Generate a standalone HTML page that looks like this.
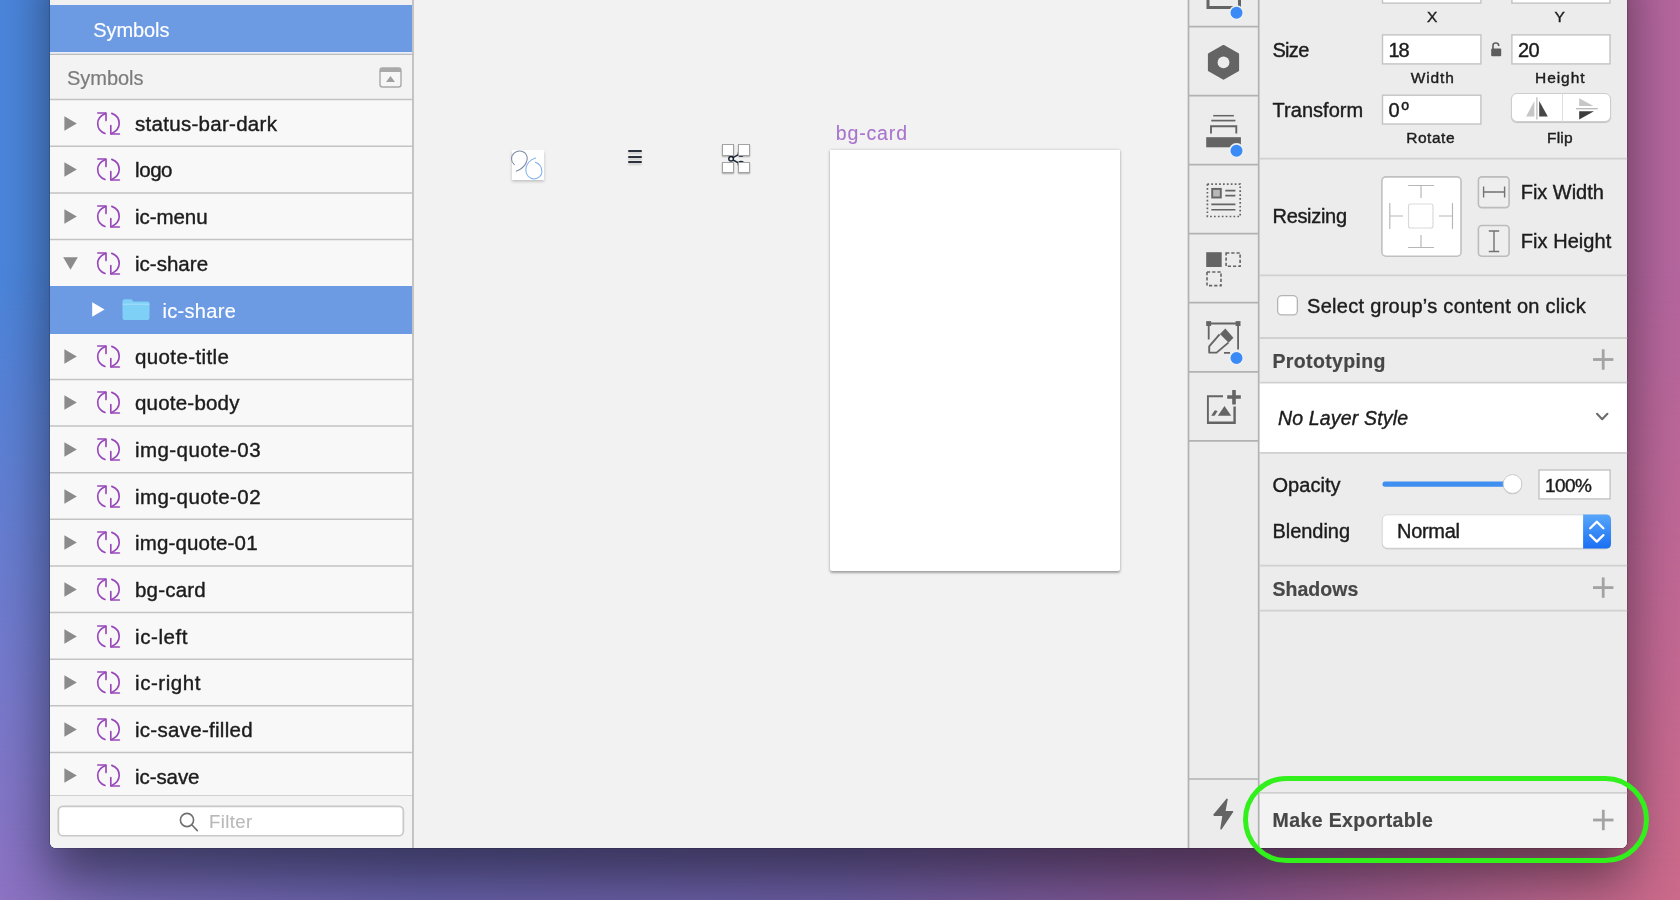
<!DOCTYPE html>
<html><head><meta charset="utf-8"><title>Sketch</title><style>
html,body{margin:0;padding:0}
body{width:1680px;height:900px;overflow:hidden;position:relative;font-family:"Liberation Sans",sans-serif;
background:linear-gradient(90deg,#4a86dc 0%,#5c7ad0 25%,#7a6cbc 50%,#a465a8 80%,#b5669e 100%);}
#bgb{position:absolute;left:0;top:0;width:1680px;height:900px;background:linear-gradient(90deg,#8e72c2 0%,#7468b2 8%,#6660a8 25%,#6a5ca0 50%,#83548f 72%,#b8648c 92%,#cc6a8a 100%);-webkit-mask-image:linear-gradient(to bottom,rgba(0,0,0,0) 30%,rgba(0,0,0,1) 100%);mask-image:linear-gradient(to bottom,rgba(0,0,0,0) 30%,rgba(0,0,0,1) 100%)}
.a{position:absolute;display:block}
.t{position:absolute;white-space:nowrap;display:block}
#win{border-radius:6px;box-shadow:0 28px 50px 2px rgba(0,0,0,.46),0 0 0 .6px rgba(0,0,0,.25);background:#ececec}
</style></head><body>
<div id="bgb"></div>
<div class="a" id="win" style="left:50px;top:-60px;width:1577.2px;height:908px;"></div>
<div class="a" style="left:50.00px;top:-10.00px;width:362.40px;height:858.00px;background:#f8f8f8;border-bottom-left-radius:6px;"></div>
<div class="a" style="left:50.00px;top:-10.00px;width:362.40px;height:15.00px;background:#f0f0f0;"></div>
<div class="a" style="left:50.00px;top:5.00px;width:362.40px;height:46.80px;background:#6c9be3;"></div>
<div class="a" style="left:50.00px;top:51.80px;width:362.40px;height:2.20px;background:#e9eef8;"></div>
<div class="a" style="left:50.00px;top:54.00px;width:362.40px;height:45.00px;background:#f3f3f3;"></div>
<svg class="a" style="left:378px;top:66px" width="25" height="23" viewBox="0 0 25 23"><rect x="2" y="2" width="21" height="19" rx="2.5" fill="#f6f6f6" stroke="#a9a9a9" stroke-width="1.4"/><rect x="2" y="2" width="21" height="4" fill="#a9a9a9"/><path d="M8 16 L12.5 10 L17 16 Z" fill="#a0a0a0"/></svg>
<svg class="a" style="left:63px;top:114.61px" width="15" height="17" viewBox="0 0 15 17"><path d="M1.4 1.2 L13.8 8.5 L1.4 15.8 Z" fill="#8b8b8b"/></svg>
<svg class="a" style="left:96px;top:110.61px" width="26" height="26" viewBox="0 0 26 26" fill="none" stroke="#9847bb" stroke-width="1.65" stroke-linecap="round" stroke-linejoin="round"><path d="M9 22.5 C4.6 21 1.7 17 1.7 12.3 C1.7 8.2 4.4 4.6 9.4 2.4"/><path d="M1.8 2 H10 V9.6"/><path d="M15.8 2.4 C20.3 4 23.2 8 23.2 12.6 C23.2 16.8 20.4 20.4 15.4 22.7"/><path d="M14.8 14.6 V23 H23.4"/></svg>
<svg class="a" style="left:63px;top:161.25px" width="15" height="17" viewBox="0 0 15 17"><path d="M1.4 1.2 L13.8 8.5 L1.4 15.8 Z" fill="#8b8b8b"/></svg>
<svg class="a" style="left:96px;top:157.25px" width="26" height="26" viewBox="0 0 26 26" fill="none" stroke="#9847bb" stroke-width="1.65" stroke-linecap="round" stroke-linejoin="round"><path d="M9 22.5 C4.6 21 1.7 17 1.7 12.3 C1.7 8.2 4.4 4.6 9.4 2.4"/><path d="M1.8 2 H10 V9.6"/><path d="M15.8 2.4 C20.3 4 23.2 8 23.2 12.6 C23.2 16.8 20.4 20.4 15.4 22.7"/><path d="M14.8 14.6 V23 H23.4"/></svg>
<svg class="a" style="left:63px;top:207.88px" width="15" height="17" viewBox="0 0 15 17"><path d="M1.4 1.2 L13.8 8.5 L1.4 15.8 Z" fill="#8b8b8b"/></svg>
<svg class="a" style="left:96px;top:203.88px" width="26" height="26" viewBox="0 0 26 26" fill="none" stroke="#9847bb" stroke-width="1.65" stroke-linecap="round" stroke-linejoin="round"><path d="M9 22.5 C4.6 21 1.7 17 1.7 12.3 C1.7 8.2 4.4 4.6 9.4 2.4"/><path d="M1.8 2 H10 V9.6"/><path d="M15.8 2.4 C20.3 4 23.2 8 23.2 12.6 C23.2 16.8 20.4 20.4 15.4 22.7"/><path d="M14.8 14.6 V23 H23.4"/></svg>
<svg class="a" style="left:62px;top:255.51px" width="17" height="15" viewBox="0 0 17 15"><path d="M1.2 1.2 H15.8 L8.5 13.8 Z" fill="#8b8b8b"/></svg>
<svg class="a" style="left:96px;top:250.51px" width="26" height="26" viewBox="0 0 26 26" fill="none" stroke="#9847bb" stroke-width="1.65" stroke-linecap="round" stroke-linejoin="round"><path d="M9 22.5 C4.6 21 1.7 17 1.7 12.3 C1.7 8.2 4.4 4.6 9.4 2.4"/><path d="M1.8 2 H10 V9.6"/><path d="M15.8 2.4 C20.3 4 23.2 8 23.2 12.6 C23.2 16.8 20.4 20.4 15.4 22.7"/><path d="M14.8 14.6 V23 H23.4"/></svg>
<div class="a" style="left:50.00px;top:285.82px;width:362.40px;height:47.73px;background:#6c9be3;"></div>
<svg class="a" style="left:91px;top:301.13px" width="15" height="17" viewBox="0 0 15 17"><path d="M1.2 1.2 L13.6 8.5 L1.2 15.8 Z" fill="#fff"/></svg>
<svg class="a" style="left:122px;top:297.63px" width="28" height="24" viewBox="0 0 28 24"><path d="M0.5 3.2 Q0.5 1.2 2.5 1.2 H8.5 Q9.8 1.2 10.4 2.2 L11.2 3.6 H25.5 Q27.5 3.6 27.5 5.6 V20 Q27.5 22 25.5 22 H2.5 Q0.5 22 0.5 20 Z" fill="#7fd0f6"/><path d="M0.5 6.2 H27.5" stroke="#a5e0fa" stroke-width="1"/></svg>
<svg class="a" style="left:63px;top:347.76px" width="15" height="17" viewBox="0 0 15 17"><path d="M1.4 1.2 L13.8 8.5 L1.4 15.8 Z" fill="#8b8b8b"/></svg>
<svg class="a" style="left:96px;top:343.76px" width="26" height="26" viewBox="0 0 26 26" fill="none" stroke="#9847bb" stroke-width="1.65" stroke-linecap="round" stroke-linejoin="round"><path d="M9 22.5 C4.6 21 1.7 17 1.7 12.3 C1.7 8.2 4.4 4.6 9.4 2.4"/><path d="M1.8 2 H10 V9.6"/><path d="M15.8 2.4 C20.3 4 23.2 8 23.2 12.6 C23.2 16.8 20.4 20.4 15.4 22.7"/><path d="M14.8 14.6 V23 H23.4"/></svg>
<svg class="a" style="left:63px;top:394.40px" width="15" height="17" viewBox="0 0 15 17"><path d="M1.4 1.2 L13.8 8.5 L1.4 15.8 Z" fill="#8b8b8b"/></svg>
<svg class="a" style="left:96px;top:390.40px" width="26" height="26" viewBox="0 0 26 26" fill="none" stroke="#9847bb" stroke-width="1.65" stroke-linecap="round" stroke-linejoin="round"><path d="M9 22.5 C4.6 21 1.7 17 1.7 12.3 C1.7 8.2 4.4 4.6 9.4 2.4"/><path d="M1.8 2 H10 V9.6"/><path d="M15.8 2.4 C20.3 4 23.2 8 23.2 12.6 C23.2 16.8 20.4 20.4 15.4 22.7"/><path d="M14.8 14.6 V23 H23.4"/></svg>
<svg class="a" style="left:63px;top:441.03px" width="15" height="17" viewBox="0 0 15 17"><path d="M1.4 1.2 L13.8 8.5 L1.4 15.8 Z" fill="#8b8b8b"/></svg>
<svg class="a" style="left:96px;top:437.03px" width="26" height="26" viewBox="0 0 26 26" fill="none" stroke="#9847bb" stroke-width="1.65" stroke-linecap="round" stroke-linejoin="round"><path d="M9 22.5 C4.6 21 1.7 17 1.7 12.3 C1.7 8.2 4.4 4.6 9.4 2.4"/><path d="M1.8 2 H10 V9.6"/><path d="M15.8 2.4 C20.3 4 23.2 8 23.2 12.6 C23.2 16.8 20.4 20.4 15.4 22.7"/><path d="M14.8 14.6 V23 H23.4"/></svg>
<svg class="a" style="left:63px;top:487.66px" width="15" height="17" viewBox="0 0 15 17"><path d="M1.4 1.2 L13.8 8.5 L1.4 15.8 Z" fill="#8b8b8b"/></svg>
<svg class="a" style="left:96px;top:483.66px" width="26" height="26" viewBox="0 0 26 26" fill="none" stroke="#9847bb" stroke-width="1.65" stroke-linecap="round" stroke-linejoin="round"><path d="M9 22.5 C4.6 21 1.7 17 1.7 12.3 C1.7 8.2 4.4 4.6 9.4 2.4"/><path d="M1.8 2 H10 V9.6"/><path d="M15.8 2.4 C20.3 4 23.2 8 23.2 12.6 C23.2 16.8 20.4 20.4 15.4 22.7"/><path d="M14.8 14.6 V23 H23.4"/></svg>
<svg class="a" style="left:63px;top:534.29px" width="15" height="17" viewBox="0 0 15 17"><path d="M1.4 1.2 L13.8 8.5 L1.4 15.8 Z" fill="#8b8b8b"/></svg>
<svg class="a" style="left:96px;top:530.29px" width="26" height="26" viewBox="0 0 26 26" fill="none" stroke="#9847bb" stroke-width="1.65" stroke-linecap="round" stroke-linejoin="round"><path d="M9 22.5 C4.6 21 1.7 17 1.7 12.3 C1.7 8.2 4.4 4.6 9.4 2.4"/><path d="M1.8 2 H10 V9.6"/><path d="M15.8 2.4 C20.3 4 23.2 8 23.2 12.6 C23.2 16.8 20.4 20.4 15.4 22.7"/><path d="M14.8 14.6 V23 H23.4"/></svg>
<svg class="a" style="left:63px;top:580.91px" width="15" height="17" viewBox="0 0 15 17"><path d="M1.4 1.2 L13.8 8.5 L1.4 15.8 Z" fill="#8b8b8b"/></svg>
<svg class="a" style="left:96px;top:576.91px" width="26" height="26" viewBox="0 0 26 26" fill="none" stroke="#9847bb" stroke-width="1.65" stroke-linecap="round" stroke-linejoin="round"><path d="M9 22.5 C4.6 21 1.7 17 1.7 12.3 C1.7 8.2 4.4 4.6 9.4 2.4"/><path d="M1.8 2 H10 V9.6"/><path d="M15.8 2.4 C20.3 4 23.2 8 23.2 12.6 C23.2 16.8 20.4 20.4 15.4 22.7"/><path d="M14.8 14.6 V23 H23.4"/></svg>
<svg class="a" style="left:63px;top:627.55px" width="15" height="17" viewBox="0 0 15 17"><path d="M1.4 1.2 L13.8 8.5 L1.4 15.8 Z" fill="#8b8b8b"/></svg>
<svg class="a" style="left:96px;top:623.55px" width="26" height="26" viewBox="0 0 26 26" fill="none" stroke="#9847bb" stroke-width="1.65" stroke-linecap="round" stroke-linejoin="round"><path d="M9 22.5 C4.6 21 1.7 17 1.7 12.3 C1.7 8.2 4.4 4.6 9.4 2.4"/><path d="M1.8 2 H10 V9.6"/><path d="M15.8 2.4 C20.3 4 23.2 8 23.2 12.6 C23.2 16.8 20.4 20.4 15.4 22.7"/><path d="M14.8 14.6 V23 H23.4"/></svg>
<svg class="a" style="left:63px;top:674.18px" width="15" height="17" viewBox="0 0 15 17"><path d="M1.4 1.2 L13.8 8.5 L1.4 15.8 Z" fill="#8b8b8b"/></svg>
<svg class="a" style="left:96px;top:670.18px" width="26" height="26" viewBox="0 0 26 26" fill="none" stroke="#9847bb" stroke-width="1.65" stroke-linecap="round" stroke-linejoin="round"><path d="M9 22.5 C4.6 21 1.7 17 1.7 12.3 C1.7 8.2 4.4 4.6 9.4 2.4"/><path d="M1.8 2 H10 V9.6"/><path d="M15.8 2.4 C20.3 4 23.2 8 23.2 12.6 C23.2 16.8 20.4 20.4 15.4 22.7"/><path d="M14.8 14.6 V23 H23.4"/></svg>
<svg class="a" style="left:63px;top:720.81px" width="15" height="17" viewBox="0 0 15 17"><path d="M1.4 1.2 L13.8 8.5 L1.4 15.8 Z" fill="#8b8b8b"/></svg>
<svg class="a" style="left:96px;top:716.81px" width="26" height="26" viewBox="0 0 26 26" fill="none" stroke="#9847bb" stroke-width="1.65" stroke-linecap="round" stroke-linejoin="round"><path d="M9 22.5 C4.6 21 1.7 17 1.7 12.3 C1.7 8.2 4.4 4.6 9.4 2.4"/><path d="M1.8 2 H10 V9.6"/><path d="M15.8 2.4 C20.3 4 23.2 8 23.2 12.6 C23.2 16.8 20.4 20.4 15.4 22.7"/><path d="M14.8 14.6 V23 H23.4"/></svg>
<svg class="a" style="left:63px;top:767.44px" width="15" height="17" viewBox="0 0 15 17"><path d="M1.4 1.2 L13.8 8.5 L1.4 15.8 Z" fill="#8b8b8b"/></svg>
<svg class="a" style="left:96px;top:763.44px" width="26" height="26" viewBox="0 0 26 26" fill="none" stroke="#9847bb" stroke-width="1.65" stroke-linecap="round" stroke-linejoin="round"><path d="M9 22.5 C4.6 21 1.7 17 1.7 12.3 C1.7 8.2 4.4 4.6 9.4 2.4"/><path d="M1.8 2 H10 V9.6"/><path d="M15.8 2.4 C20.3 4 23.2 8 23.2 12.6 C23.2 16.8 20.4 20.4 15.4 22.7"/><path d="M14.8 14.6 V23 H23.4"/></svg>
<div class="a" style="left:50.00px;top:795.00px;width:362.40px;height:53.00px;background:#f3f3f3;border-top:1.5px solid #cfcfcf;border-bottom-left-radius:6px;box-sizing:border-box;"></div>
<svg class="a" style="left:55px;top:803px;" width="352" height="37" viewBox="55 803 352 37"><rect x="58.35" y="806.35" width="345.00" height="29.40" rx="4.5" fill="#fff" stroke="#c8c8c8" stroke-width="1.7"/></svg>
<svg class="a" style="left:177.3px;top:810.4px" width="24" height="24" viewBox="0 0 24 24" fill="none" stroke="#6f6f6f" stroke-width="1.6" stroke-linecap="round"><circle cx="10" cy="10" r="6.6"/><path d="M15 15 L20.3 20.6"/></svg>
<div class="a" style="left:413.20px;top:-10.00px;width:774.80px;height:858.00px;background:#f2f2f2;"></div>
<div class="a" style="left:512.00px;top:150.00px;width:31.60px;height:30.20px;background:#fff;box-shadow:0 1.5px 3px rgba(0,0,0,.22);"></div>
<svg class="a" style="left:505px;top:142px" width="48" height="48" viewBox="505 142 48 48" fill="none" stroke-width="1.05" stroke-linecap="round"><path d="M514.3 164.6 C510.8 162 510.4 156 514.4 152.8 C518.5 149.5 525.2 150.8 526.9 156.2 C528.4 161.2 524 168.6 516.3 171.1" stroke="#7f8aa3"/><path d="M535.7 158 C530 159.5 526 164 525.8 169.5 C525.6 175 529.5 178.9 534 178.9 C538.5 178.9 541.9 175.5 541.9 171.5 C541.9 167 539 163.6 535.4 162.3" stroke="#7fb0ee"/></svg>
<div class="a" style="left:627.60px;top:150.20px;width:14.40px;height:2.10px;background:#2a303c;border-radius:1px;box-shadow:0 2px 2px rgba(0,0,0,.16);"></div>
<div class="a" style="left:627.60px;top:155.55px;width:14.40px;height:2.10px;background:#2a303c;border-radius:1px;box-shadow:0 2px 2px rgba(0,0,0,.16);"></div>
<div class="a" style="left:627.60px;top:160.90px;width:14.40px;height:2.10px;background:#2a303c;border-radius:1px;box-shadow:0 2px 2px rgba(0,0,0,.16);"></div>
<svg class="a" style="left:716px;top:138px" width="40" height="40" viewBox="716 138 40 40" fill="none" stroke="#1c2738" stroke-width="1.5"><circle cx="731.1" cy="158.8" r="2.3"/><path d="M733 157.6 L738.8 154.4 M733 160 L738.8 163.2"/><circle cx="741" cy="153.4" r="2.6"/><circle cx="741" cy="164.2" r="2.6"/></svg>
<div class="a" style="left:722.00px;top:144.20px;width:11.90px;height:11.70px;background:#fff;border:1px solid #a2a2a2;box-sizing:border-box;box-shadow:0 1px 1.5px rgba(0,0,0,.3);"></div>
<div class="a" style="left:737.80px;top:144.20px;width:11.90px;height:11.70px;background:#fff;border:1px solid #a2a2a2;box-sizing:border-box;box-shadow:0 1px 1.5px rgba(0,0,0,.3);"></div>
<div class="a" style="left:722.00px;top:161.70px;width:11.90px;height:11.70px;background:#fff;border:1px solid #a2a2a2;box-sizing:border-box;box-shadow:0 1px 1.5px rgba(0,0,0,.3);"></div>
<div class="a" style="left:737.80px;top:161.70px;width:11.90px;height:11.70px;background:#fff;border:1px solid #a2a2a2;box-sizing:border-box;box-shadow:0 1px 1.5px rgba(0,0,0,.3);"></div>
<div class="a" style="left:830.00px;top:150.00px;width:290.00px;height:421.20px;background:#fff;border-radius:0 0 2px 2px;box-shadow:0 1.5px 2.5px rgba(0,0,0,.30),0 0 3.5px rgba(0,0,0,.13);"></div>
<div class="a" style="left:1188.00px;top:-10.00px;width:71.00px;height:858.00px;background:#ececec;"></div>
<svg class="a" style="left:1188px;top:0px" width="72" height="850" viewBox="1188 0 72 850">
<g fill="none" stroke="#646464">
<!-- icon1 partial rect -->
<path d="M1208 -5 V7.6 H1239.5 V-5" stroke-width="3"/>
<!-- icon3 -->
<path d="M1213.2 115.7 H1233.9" stroke-width="1.5"/>
<path d="M1211.3 120.6 H1235.4" stroke-width="1.7"/>
<path d="M1211 133.6 V126.2 H1236.3 V133.6" stroke-width="1.9"/>
<!-- icon4 -->
<rect x="1207.4" y="184.1" width="32.8" height="32.4" stroke-width="1.7" stroke-dasharray="1.7 2.2"/>
<rect x="1212.2" y="188.9" width="8.6" height="8.6" stroke-width="1.9" fill="#b7b7b7"/>
<path d="M1225.3 190.6 H1235.4 M1225.3 195.6 H1235.4 M1211.3 204.4 H1235.4 M1211.3 209.8 H1235.4" stroke-width="1.6"/>
<!-- icon5 -->
<rect x="1226.1" y="253" width="14" height="13.3" stroke-width="1.6" stroke-dasharray="3.2 2"/>
<rect x="1207" y="272" width="14" height="13.6" stroke-width="1.6" stroke-dasharray="3.2 2"/>
<!-- icon6 -->
<path d="M1208.7 323.5 H1238.1 M1208.7 323.5 V339.5 M1238.1 323.5 V349.4 M1224 352.8 H1230" stroke-width="1.8"/>
<path d="M1219.6 334.4 L1209.2 346.3 V352.6 H1216.6 L1228.4 342.6" stroke-width="1.9" stroke-linejoin="round"/>
<!-- icon7 -->
<path d="M1223 396.3 H1207.9 V422.6" stroke-width="1.9"/>
<path d="M1207 422.8 H1234.6 V406.5" stroke-width="2.4"/>
</g>
<g fill="#646464">
<path d="M1223.5 46 L1238 54.2 V70.4 L1223.5 78.6 L1209 70.4 V54.2 Z" stroke="#646464" stroke-width="2.2" stroke-linejoin="round"/><circle cx="1223.5" cy="62.4" r="5.9" fill="#ececec"/>
<rect x="1206.2" y="137.2" width="34.7" height="10.1"/>
<rect x="1206.2" y="252.2" width="15.5" height="14.8"/>
<rect x="1206.2" y="321.1" width="4.9" height="4.9"/><rect x="1235.6" y="321.1" width="4.9" height="4.9"/>
<path d="M1219.9 333.9 L1225.3 328.4 L1233.4 337.8 L1228.7 342.7 Z"/>
<path d="M1227.2 395.3 H1240.8 V398.8 H1227.2 Z M1232.2 390 H1235.8 V404.5 H1232.2 Z"/>
<path d="M1224.5 406 L1231.2 415.8 H1217.8 Z M1211.2 415.8 L1214.8 410.2 L1217.6 410.9 L1214.6 415.8 Z"/>
<path d="M1226.7 798.5 L1213.2 814.8 L1214 815.9 H1222.3 L1220.2 829.2 L1221.5 829.5 L1233.4 811.8 L1232.8 810.9 H1225.6 L1227.8 799 Z"/>
</g>
<g fill="#3b8bf6" stroke="#eef0f3" stroke-width="1.6">
<circle cx="1236.5" cy="12.8" r="6.8"/><circle cx="1236.5" cy="150.7" r="6.8"/><circle cx="1236.5" cy="358" r="6.8"/>
</g>
</svg>

<div class="a" style="left:1259.00px;top:-10.00px;width:368.20px;height:858.00px;background:#ececec;border-bottom-right-radius:6px;"></div>
<svg class="a" style="left:1379px;top:-22px;" width="105" height="29" viewBox="1379 -22 105 29"><rect x="1382.50" y="-19.30" width="98.40" height="22.40" rx="0" fill="#fff" stroke="#c3c3c3" stroke-width="1.4"/></svg>
<svg class="a" style="left:1509px;top:-22px;" width="105" height="29" viewBox="1509 -22 105 29"><rect x="1511.90" y="-19.30" width="98.10" height="22.40" rx="0" fill="#fff" stroke="#c3c3c3" stroke-width="1.4"/></svg>
<svg class="a" style="left:1379px;top:32px;" width="105" height="36" viewBox="1379 32 105 36"><rect x="1382.50" y="34.90" width="98.40" height="29.00" rx="0" fill="#fff" stroke="#c3c3c3" stroke-width="1.4"/></svg>
<svg class="a" style="left:1509px;top:32px;" width="105" height="36" viewBox="1509 32 105 36"><rect x="1511.90" y="34.90" width="98.10" height="29.00" rx="0" fill="#fff" stroke="#c3c3c3" stroke-width="1.4"/></svg>
<svg class="a" style="left:1488px;top:38.7px" width="16" height="20" viewBox="0 0 16 20"><path d="M5 10 V6.2 C5 3.2 10.6 3.2 10.6 6.2 V7" fill="none" stroke="#5d5d5d" stroke-width="1.6"/><rect x="3.2" y="9.6" width="10" height="7.6" rx="1" fill="#5d5d5d"/></svg>
<svg class="a" style="left:1379px;top:92px;" width="105" height="36" viewBox="1379 92 105 36"><rect x="1382.50" y="95.20" width="98.40" height="28.80" rx="0" fill="#fff" stroke="#c3c3c3" stroke-width="1.4"/></svg>
<div class="a" style="left:1511.20px;top:93.40px;width:99.50px;height:29.00px;background:#fff;border:1px solid #cdcdcd;border-radius:6px;box-sizing:border-box;box-shadow:0 1px 1px rgba(0,0,0,.18);"></div>
<div class="a" style="left:1561.60px;top:94.00px;width:1.10px;height:27.60px;background:#dedede;"></div>
<svg class="a" style="left:1520px;top:92px" width="86" height="32" viewBox="1520 92 86 32"><path d="M1534.4 101.1 V116.4 H1526.1 Z" fill="#c6c6c6"/><path d="M1539.2 101.1 V116.4 H1547.8 Z" fill="#474747"/><path d="M1536.9 97.2 V119.4" stroke="#c2c2c2" stroke-width="1.4"/><path d="M1579.2 98.3 V106.1 H1593.4 Z" fill="#c6c6c6"/><path d="M1579.2 111.3 H1594 L1579.2 119.4 Z" fill="#3c3c3c"/><path d="M1576.1 108.7 H1597.8" stroke="#bcbcbc" stroke-width="1.4"/></svg>
<svg class="a" style="left:1379px;top:174px;" width="86" height="86" viewBox="1379 174 86 86"><rect x="1381.90" y="176.90" width="79.10" height="79.30" rx="4" fill="#fff" stroke="#c0c0c0" stroke-width="1.6"/></svg>
<svg class="a" style="left:1381px;top:176px" width="81" height="81" viewBox="0 0 81 81" fill="none" stroke="#b6b6b6" stroke-width="1.15"><path d="M27 9.5 H53 M40 9.5 V22"/><path d="M27 71.5 H53 M40 71.5 V59"/><path d="M8.8 27 V53 M8.8 40 H22"/><path d="M71.5 27 V53 M71.5 40 H58"/><rect x="27.5" y="28" width="24.5" height="24" rx="2" stroke="#d9d9d9"/></svg>
<svg class="a" style="left:1475px;top:174px;" width="38" height="38" viewBox="1475 174 38 38"><rect x="1478.40" y="176.90" width="30.70" height="30.70" rx="3.5" fill="#eeeeee" stroke="#bcbcbc" stroke-width="1.6"/></svg>
<svg class="a" style="left:1475px;top:222px;" width="38" height="38" viewBox="1475 222 38 38"><rect x="1478.40" y="225.50" width="30.70" height="30.70" rx="3.5" fill="#eeeeee" stroke="#bcbcbc" stroke-width="1.6"/></svg>
<svg class="a" style="left:1477.6px;top:176.3px" width="32" height="32" viewBox="0 0 32 32" fill="none" stroke="#727272" stroke-width="1.4"><path d="M5.6 10.5 V21.5 M26.6 10.5 V21.5 M5.6 16 H26.6"/></svg>
<svg class="a" style="left:1477.6px;top:224.6px" width="32" height="32" viewBox="0 0 32 32" fill="none" stroke="#727272" stroke-width="1.4"><path d="M10.8 6 H21.2 M10.8 26.5 H21.2 M16 6 V26.5"/></svg>
<svg class="a" style="left:1275px;top:293px;" width="27" height="26" viewBox="1275 293 27 26"><rect x="1277.65" y="295.65" width="19.70" height="19.30" rx="4.2" fill="#fff" stroke="#b4b4b4" stroke-width="1.3"/></svg>
<div class="a" style="left:1259.00px;top:383.30px;width:368.20px;height:68.90px;background:#fff;"></div>
<svg class="a" style="left:1594px;top:410px" width="16" height="13" viewBox="0 0 16 13" fill="none" stroke="#6c6c6c" stroke-width="2.1" stroke-linecap="round" stroke-linejoin="round"><path d="M3 3.8 L8.2 9.2 L13.4 3.8"/></svg>
<svg class="a" style="left:1380px;top:478px" width="130" height="12" viewBox="1380 478 130 12"><rect x="1382.5" y="481.6" width="125" height="5.1" rx="2.5" fill="#3f8ff0"/></svg>
<svg class="a" style="left:1498px;top:470px" width="30" height="30" viewBox="1498 470 30 30"><circle cx="1512.5" cy="484.7" r="9.6" fill="rgba(0,0,0,.18)"/><circle cx="1512.5" cy="484" r="9.4" fill="#fff" stroke="#c6c6c6" stroke-width="0.9"/></svg>
<svg class="a" style="left:1536px;top:467px;" width="78" height="36" viewBox="1536 467 78 36"><rect x="1539.00" y="470.00" width="71.10" height="28.90" rx="0" fill="#fff" stroke="#c3c3c3" stroke-width="1.4"/></svg>
<svg class="a" style="left:1378px;top:510px" width="238" height="44" viewBox="1378 510 238 44"><defs><linearGradient id="bg1" x1="0" y1="0" x2="0" y2="1"><stop offset="0" stop-color="#58a6fa"/><stop offset="1" stop-color="#1a6ff3"/></linearGradient></defs><rect x="1382" y="515.4" width="228.8" height="33.8" rx="5.5" fill="rgba(0,0,0,.22)"/><rect x="1382.2" y="514.8" width="228.4" height="33.4" rx="5.2" fill="#fff" stroke="#d2d2d2" stroke-width="0.8"/><path d="M1583.1 514.4 H1605.8 Q1611 514.4 1611 519.6 V543.4 Q1611 548.6 1605.8 548.6 H1583.1 Z" fill="url(#bg1)"/><path d="M1590.2 528.3 L1596.8 521.8 L1603.4 528.3 M1590.2 535.1 L1596.8 541.6 L1603.4 535.1" fill="none" stroke="#fff" stroke-width="2.3" stroke-linecap="round" stroke-linejoin="round"/></svg>
<div class="a" style="left:1259.00px;top:793.40px;width:368.20px;height:54.60px;background:#f3f3f3;border-bottom-right-radius:6px;"></div>
<svg class="a" style="left:0;top:0" width="1680" height="900" fill="none"><path d="M50.00 54.30 H412.40" stroke="#bcbcbc" stroke-width="1.3"/><path d="M50.00 146.28 H412.40" stroke="#c3c3c3" stroke-width="1.5"/><path d="M50.00 192.91 H412.40" stroke="#c3c3c3" stroke-width="1.5"/><path d="M50.00 239.54 H412.40" stroke="#c3c3c3" stroke-width="1.5"/><path d="M50.00 379.43 H412.40" stroke="#c3c3c3" stroke-width="1.5"/><path d="M50.00 426.06 H412.40" stroke="#c3c3c3" stroke-width="1.5"/><path d="M50.00 472.69 H412.40" stroke="#c3c3c3" stroke-width="1.5"/><path d="M50.00 519.32 H412.40" stroke="#c3c3c3" stroke-width="1.5"/><path d="M50.00 565.95 H412.40" stroke="#c3c3c3" stroke-width="1.5"/><path d="M50.00 612.58 H412.40" stroke="#c3c3c3" stroke-width="1.5"/><path d="M50.00 659.21 H412.40" stroke="#c3c3c3" stroke-width="1.5"/><path d="M50.00 705.84 H412.40" stroke="#c3c3c3" stroke-width="1.5"/><path d="M50.00 752.47 H412.40" stroke="#c3c3c3" stroke-width="1.5"/><path d="M50.00 99.60 H412.40" stroke="#c3c3c3" stroke-width="1.5"/><path d="M413.00 -5.00 V848.00" stroke="#b6b6b6" stroke-width="1.5"/><path d="M1188.50 -5.00 V848.00" stroke="#b2b2b2" stroke-width="1.7"/><path d="M1258.70 -5.00 V848.00" stroke="#b2b2b2" stroke-width="1.7"/><path d="M1188.00 26.60 H1258.70" stroke="#b2b2b2" stroke-width="1.7"/><path d="M1188.00 95.65 H1258.70" stroke="#b2b2b2" stroke-width="1.7"/><path d="M1188.00 164.60 H1258.70" stroke="#b2b2b2" stroke-width="1.7"/><path d="M1188.00 233.70 H1258.70" stroke="#b2b2b2" stroke-width="1.7"/><path d="M1188.00 302.70 H1258.70" stroke="#b2b2b2" stroke-width="1.7"/><path d="M1188.00 371.80 H1258.70" stroke="#b2b2b2" stroke-width="1.7"/><path d="M1188.00 440.90 H1258.70" stroke="#b2b2b2" stroke-width="1.7"/><path d="M1188.00 779.00 H1258.70" stroke="#b2b2b2" stroke-width="1.7"/><path d="M1259.70 158.70 H1627.20" stroke="#d0d0d0" stroke-width="1.8"/><path d="M1259.70 275.30 H1627.20" stroke="#d0d0d0" stroke-width="1.8"/><path d="M1259.70 338.00 H1627.20" stroke="#d0d0d0" stroke-width="1.8"/><path d="M1593.00 359.50 H1613.40" stroke="#a3a3a3" stroke-width="2.8"/><path d="M1603.20 349.30 V369.70" stroke="#a3a3a3" stroke-width="2.8"/><path d="M1259.70 382.65 H1627.20" stroke="#d0d0d0" stroke-width="1.8"/><path d="M1259.70 452.85 H1627.20" stroke="#d0d0d0" stroke-width="1.8"/><path d="M1259.70 565.70 H1627.20" stroke="#d0d0d0" stroke-width="1.8"/><path d="M1593.00 587.60 H1613.40" stroke="#a3a3a3" stroke-width="2.8"/><path d="M1603.20 577.40 V597.80" stroke="#a3a3a3" stroke-width="2.8"/><path d="M1259.70 610.70 H1627.20" stroke="#d0d0d0" stroke-width="1.8"/><path d="M1259.70 792.85 H1627.20" stroke="#d0d0d0" stroke-width="1.8"/><path d="M1593.10 820.00 H1613.50" stroke="#a3a3a3" stroke-width="2.8"/><path d="M1603.30 809.80 V830.20" stroke="#a3a3a3" stroke-width="2.8"/></svg>
<svg class="a" style="left:0;top:0;opacity:.999" width="1680" height="900" font-family="Liberation Sans, sans-serif"><text x="93.25" y="37" font-size="20" fill="#ffffff" letter-spacing="-0.075" stroke="#ffffff" stroke-width="0.15">Symbols</text><text x="67.00" y="85" font-size="20" fill="#7b7b7b" letter-spacing="-0.033" stroke="#7b7b7b" stroke-width="0.2">Symbols</text><text x="135.00" y="131" font-size="20.5" fill="#1c1c1c" letter-spacing="0.288" stroke="#1c1c1c" stroke-width="0.4">status-bar-dark</text><text x="135.00" y="177" font-size="20.5" fill="#1c1c1c" letter-spacing="-0.415" stroke="#1c1c1c" stroke-width="0.4">logo</text><text x="135.00" y="224" font-size="20.5" fill="#1c1c1c" letter-spacing="-0.063" stroke="#1c1c1c" stroke-width="0.4">ic-menu</text><text x="135.00" y="271" font-size="20.5" fill="#1c1c1c" letter-spacing="0.018" stroke="#1c1c1c" stroke-width="0.4">ic-share</text><text x="162.50" y="318" font-size="20" fill="#ffffff" letter-spacing="0.307" stroke="#ffffff" stroke-width="0.15">ic-share</text><text x="135.00" y="364" font-size="20.5" fill="#1c1c1c" letter-spacing="0.375" stroke="#1c1c1c" stroke-width="0.4">quote-title</text><text x="135.00" y="410" font-size="20.5" fill="#1c1c1c" letter-spacing="0.211" stroke="#1c1c1c" stroke-width="0.4">quote-body</text><text x="135.00" y="457" font-size="20.5" fill="#1c1c1c" letter-spacing="0.432" stroke="#1c1c1c" stroke-width="0.4">img-quote-03</text><text x="135.00" y="504" font-size="20.5" fill="#1c1c1c" letter-spacing="0.432" stroke="#1c1c1c" stroke-width="0.4">img-quote-02</text><text x="135.00" y="550" font-size="20.5" fill="#1c1c1c" letter-spacing="0.160" stroke="#1c1c1c" stroke-width="0.4">img-quote-01</text><text x="135.00" y="597" font-size="20.5" fill="#1c1c1c" letter-spacing="0.209" stroke="#1c1c1c" stroke-width="0.4">bg-card</text><text x="135.00" y="644" font-size="20.5" fill="#1c1c1c" letter-spacing="0.584" stroke="#1c1c1c" stroke-width="0.4">ic-left</text><text x="135.00" y="690" font-size="20.5" fill="#1c1c1c" letter-spacing="0.571" stroke="#1c1c1c" stroke-width="0.4">ic-right</text><text x="135.00" y="737" font-size="20.5" fill="#1c1c1c" letter-spacing="0.279" stroke="#1c1c1c" stroke-width="0.4">ic-save-filled</text><text x="135.00" y="784" font-size="20.5" fill="#1c1c1c" letter-spacing="-0.081" stroke="#1c1c1c" stroke-width="0.4">ic-save</text><text x="209.00" y="828" font-size="18.5" fill="#b9b9b9" letter-spacing="0.426" stroke="#b9b9b9" stroke-width="0.15">Filter</text><text x="835.75" y="140" font-size="19.5" fill="#a873cc" letter-spacing="0.857" stroke="#a873cc" stroke-width="0.1">bg-card</text><text x="1427.00" y="22" font-size="15.5" fill="#1c1c1c" letter-spacing="0.000" stroke="#1c1c1c" stroke-width="0.4">X</text><text x="1554.50" y="22" font-size="15.5" fill="#1c1c1c" letter-spacing="0.000" stroke="#1c1c1c" stroke-width="0.4">Y</text><text x="1272.50" y="57" font-size="20" fill="#1c1c1c" letter-spacing="-0.717" stroke="#1c1c1c" stroke-width="0.4">Size</text><text x="1388.50" y="57" font-size="20" fill="#1c1c1c" letter-spacing="-1.200" stroke="#1c1c1c" stroke-width="0.4">18</text><text x="1518.00" y="57" font-size="20" fill="#1c1c1c" letter-spacing="-0.700" stroke="#1c1c1c" stroke-width="0.4">20</text><text x="1410.75" y="83" font-size="15.5" fill="#1c1c1c" letter-spacing="0.849" stroke="#1c1c1c" stroke-width="0.4">Width</text><text x="1535.00" y="83" font-size="15.5" fill="#1c1c1c" letter-spacing="0.941" stroke="#1c1c1c" stroke-width="0.4">Height</text><text x="1272.50" y="117" font-size="20" fill="#1c1c1c" letter-spacing="0.044" stroke="#1c1c1c" stroke-width="0.4">Transform</text><text x="1388.50" y="117" font-size="20" fill="#1c1c1c" letter-spacing="1.850" stroke="#1c1c1c" stroke-width="0.4">0º</text><text x="1406.25" y="143" font-size="15.5" fill="#1c1c1c" letter-spacing="0.520" stroke="#1c1c1c" stroke-width="0.4">Rotate</text><text x="1547.00" y="143" font-size="15.5" fill="#1c1c1c" letter-spacing="0.182" stroke="#1c1c1c" stroke-width="0.4">Flip</text><text x="1272.50" y="223" font-size="20" fill="#1c1c1c" letter-spacing="-0.314" stroke="#1c1c1c" stroke-width="0.4">Resizing</text><text x="1520.75" y="199" font-size="20" fill="#1c1c1c" letter-spacing="-0.037" stroke="#1c1c1c" stroke-width="0.4">Fix Width</text><text x="1520.75" y="248" font-size="20" fill="#1c1c1c" letter-spacing="0.056" stroke="#1c1c1c" stroke-width="0.4">Fix Height</text><text x="1307.00" y="313" font-size="20" fill="#1c1c1c" letter-spacing="0.295" stroke="#1c1c1c" stroke-width="0.4">Select group’s content on click</text><text x="1272.50" y="368" font-size="19.5" fill="#474747" letter-spacing="0.361" stroke="#474747" stroke-width="0.2" font-weight="bold">Prototyping</text><text x="1278.00" y="425" font-size="19.5" fill="#1c1c1c" letter-spacing="0.160" stroke="#1c1c1c" stroke-width="0.4" font-style="italic">No Layer Style</text><text x="1272.50" y="492" font-size="20" fill="#1c1c1c" letter-spacing="0.033" stroke="#1c1c1c" stroke-width="0.4">Opacity</text><text x="1545.00" y="492" font-size="19" fill="#1c1c1c" letter-spacing="-0.547" stroke="#1c1c1c" stroke-width="0.4">100%</text><text x="1272.50" y="538" font-size="20" fill="#1c1c1c" letter-spacing="-0.043" stroke="#1c1c1c" stroke-width="0.4">Blending</text><text x="1397.00" y="538" font-size="20" fill="#1c1c1c" letter-spacing="-0.300" stroke="#1c1c1c" stroke-width="0.4">Normal</text><text x="1272.50" y="596" font-size="19.5" fill="#474747" letter-spacing="0.024" stroke="#474747" stroke-width="0.2" font-weight="bold">Shadows</text><text x="1272.60" y="827" font-size="19.5" fill="#474747" letter-spacing="0.370" stroke="#474747" stroke-width="0.2" font-weight="bold">Make Exportable</text></svg>
<div class="a" style="left:1243.30px;top:775.60px;width:406.10px;height:87.60px;border:5.2px solid #31f01c;border-radius:44px;box-sizing:border-box;"></div>
</body></html>
